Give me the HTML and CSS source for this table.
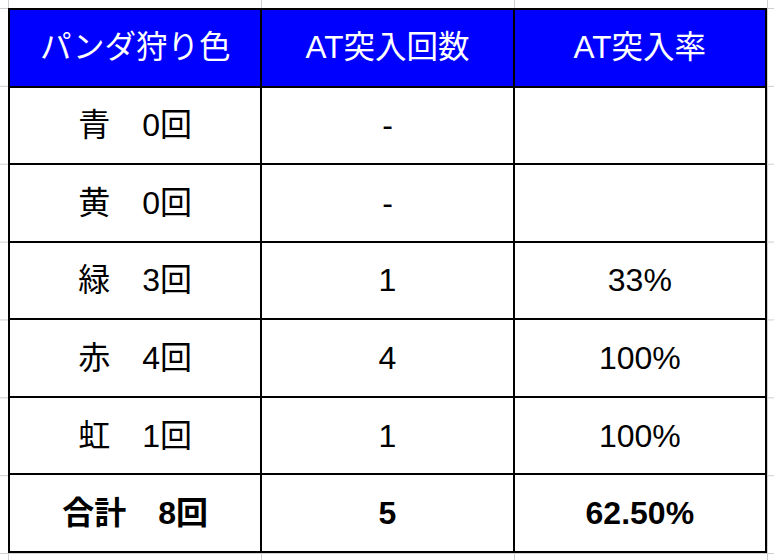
FILE: index.html
```html
<!DOCTYPE html>
<html lang="ja">
<head>
<meta charset="utf-8">
<title>パンダ狩り色</title>
<link rel="stylesheet" href="styles.css">
</head>
<body>
<div class="sheet">
  <div class="cell head">パンダ狩り色</div>
  <div class="cell head">AT突入回数</div>
  <div class="cell head">AT突入率</div>

  <div class="cell">青　0回</div>
  <div class="cell">-</div>
  <div class="cell"></div>

  <div class="cell">黄　0回</div>
  <div class="cell">-</div>
  <div class="cell"></div>

  <div class="cell">緑　3回</div>
  <div class="cell">1</div>
  <div class="cell">33%</div>

  <div class="cell">赤　4回</div>
  <div class="cell">4</div>
  <div class="cell">100%</div>

  <div class="cell">虹　1回</div>
  <div class="cell">1</div>
  <div class="cell">100%</div>

  <div class="cell total">合計　8回</div>
  <div class="cell total">5</div>
  <div class="cell total">62.50%</div>
</div>
</body>
</html>
```

FILE: styles.css
```css
html {
  background-color: #ffffff;
  background-image:
    linear-gradient(to right, #cfcfcf 1px, transparent 1px),
    linear-gradient(to bottom, #cfcfcf 1px, transparent 1px);
  background-size: 253px 77.86px;
  background-position: 8px 8px;
  min-height: 100%;
}

body {
  margin: 0;
  font-family: "Liberation Sans", "Noto Sans CJK JP", sans-serif;
  color: #000;
}

.sheet {
  margin: 8px 0 0 8px;
  width: 759px;
  height: 545px;
  box-sizing: border-box;
  display: grid;
  grid-template-columns: repeat(3, 1fr);
  grid-template-rows: repeat(7, 1fr);
  gap: 2px;
  padding: 2px;
  background: #000;
}

.cell {
  background: #fff;
  display: flex;
  align-items: center;
  justify-content: center;
  font-size: 32px;
  line-height: 1;
  white-space: nowrap;
}

.head {
  background: #0000ff;
  color: #fff;
  font-size: 31.5px;
}

.total {
  font-weight: bold;
}
```
